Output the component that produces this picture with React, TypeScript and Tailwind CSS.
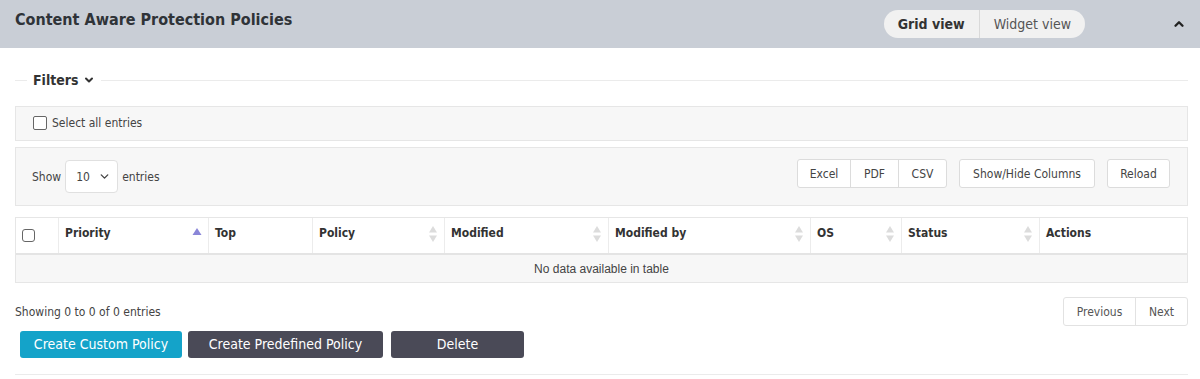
import { ChevronDown, ChevronUp } from "lucide-react";

const FONT = "font-['Tahoma','DejaVu_Sans_Condensed','DejaVu_Sans',sans-serif]";

function SortIcon({ active }: { active?: boolean }) {
  if (active) {
    return (
      <svg width="10" height="10" viewBox="0 0 10 10" className="shrink-0">
        <path d="M5 1 L9.5 8 L0.5 8 Z" fill="#8a86d8" />
      </svg>
    );
  }
  return (
    <svg width="10" height="18" viewBox="0 0 10 18" className="shrink-0">
      <path d="M5 1 L9 7.5 L1 7.5 Z" fill="#dcdcdc" />
      <path d="M5 17 L9 10.5 L1 10.5 Z" fill="#dcdcdc" />
    </svg>
  );
}

const columns: { label: string; width: string; sort: "active" | "both" | "none" }[] = [
  { label: "Priority", width: "w-[150px]", sort: "active" },
  { label: "Top", width: "w-[104px]", sort: "none" },
  { label: "Policy", width: "w-[132px]", sort: "both" },
  { label: "Modified", width: "w-[164px]", sort: "both" },
  { label: "Modified by", width: "w-[202px]", sort: "both" },
  { label: "OS", width: "w-[91px]", sort: "both" },
  { label: "Status", width: "w-[138px]", sort: "both" },
  { label: "Actions", width: "flex-1", sort: "none" },
];

export default function App() {
  return (
    <div className={`${FONT} w-[1200px] h-[379px] bg-white text-[#333] overflow-hidden`}>
      {/* header */}
      <div className="h-[48px] bg-[#c9ced6] flex items-start justify-between pl-[15px] pr-[14px]">
        <h1 className="text-[16px] font-bold text-[#2f3338] mt-[8px]">Content Aware Protection Policies</h1>
        <div className="flex items-center mt-[10px]">
          <div className="flex h-[28px] rounded-full bg-[#f1f1f1] text-[14px] overflow-hidden">
            <button className="px-[14px] font-bold text-[#333] border-r border-[#d9d9d9]">Grid view</button>
            <button className="px-[14px] text-[#555]">Widget view</button>
          </div>
          <ChevronUp className="ml-[87px] w-[14px] h-[14px] text-[#222]" strokeWidth={4} />
        </div>
      </div>

      <div className="px-[15px] pr-[12px]">
        {/* filters */}
        <div className="flex items-center mt-[16px] h-[32px]">
          <div className="w-[12px] h-px bg-[#ebebeb]" />
          <span className="px-[6px] text-[14px] font-bold text-[#333] flex items-center gap-[4px]">
            Filters
            <ChevronDown className="w-[12px] h-[12px]" strokeWidth={4} />
          </span>
          <div className="flex-1 h-px bg-[#ebebeb]" />
        </div>

        {/* select all */}
        <div className="mt-[10px] h-[35px] bg-[#f7f7f7] border border-[#e6e6e6] flex items-center pl-[17px] pb-[2px] text-[12px] text-[#444]">
          <span className="w-[14px] h-[14px] border border-[#666] rounded-[2px] bg-white mr-[5px]" />
          Select all entries
        </div>

        {/* toolbar */}
        <div className="mt-[6px] h-[59px] bg-[#f7f7f7] border border-[#e6e6e6] flex items-center justify-between pl-[16px] pr-[17px] text-[12px] text-[#444]">
          <div className="flex items-center">
            <span>Show</span>
            <div className="mx-[4px] w-[53px] h-[33px] bg-white border border-[#e0e0e0] rounded-[4px] flex items-center justify-between pl-[10px] pr-[6px]">
              <span>10</span>
              <ChevronDown className="w-[13px] h-[13px]" strokeWidth={2.5} />
            </div>
            <span>entries</span>
          </div>
          <div className="flex items-center -mt-[6px]">
            <div className="flex h-[29px] bg-white border border-[#dcdcdc] rounded-[3px]">
              <span className="w-[53px] flex items-center justify-center border-r border-[#dcdcdc]">Excel</span>
              <span className="w-[48px] flex items-center justify-center border-r border-[#dcdcdc]">PDF</span>
              <span className="w-[47px] flex items-center justify-center">CSV</span>
            </div>
            <span className="ml-[12px] w-[136px] h-[29px] bg-white border border-[#dcdcdc] rounded-[3px] flex items-center justify-center">
              Show/Hide Columns
            </span>
            <span className="ml-[12px] w-[63px] h-[29px] bg-white border border-[#dcdcdc] rounded-[3px] flex items-center justify-center">
              Reload
            </span>
          </div>
        </div>

        {/* table */}
        <div className="mt-[11px] border border-[#e6e6e6]">
          <div className="flex h-[37px] border-b-2 border-[#e4e4e4] text-[12px] font-bold text-[#333]">
            <div className="w-[43px] flex items-center pl-[6px] border-r border-[#ececec]">
              <span className="w-[13px] h-[13px] border border-[#666] rounded-[3px]" />
            </div>
            {columns.map((c, i) => (
              <div
                key={c.label}
                className={`${c.width} flex items-start justify-between pl-[6px] pr-[6px] pt-[6px] ${
                  i < columns.length - 1 ? "border-r border-[#ececec]" : ""
                }`}
              >
                <span>{c.label}</span>
                {c.sort === "active" && <span className="mt-[3px]"><SortIcon active /></span>}
                {c.sort === "both" && <span className="mt-[1px]"><SortIcon /></span>}
              </div>
            ))}
          </div>
          <div className="h-[27px] bg-[#f7f7f7] flex items-center justify-center text-[12px] text-[#444] font-['Liberation_Sans',Arial,sans-serif]">
            No data available in table
          </div>
        </div>

        {/* info + pagination */}
        <div className="flex items-start justify-between mt-[14px]">
          <span className="text-[12px] text-[#444] mt-[6px]">Showing 0 to 0 of 0 entries</span>
          <div className="flex h-[29px] border border-[#e2e2e2] rounded-[3px] text-[12px] text-[#555] bg-white">
            <span className="w-[72px] flex items-center justify-center border-r border-[#e2e2e2]">Previous</span>
            <span className="w-[51px] flex items-center justify-center">Next</span>
          </div>
        </div>

        {/* actions */}
        <div className="flex items-center gap-[6px] ml-[5px] mt-[5px] text-[14px] text-white">
          <button className="w-[162px] h-[27px] rounded-[3px] bg-[#14a3c9]">Create Custom Policy</button>
          <button className="w-[195px] h-[27px] rounded-[3px] bg-[#4a4a57]">Create Predefined Policy</button>
          <button className="ml-[2px] w-[133px] h-[27px] rounded-[3px] bg-[#4a4a57]">Delete</button>
        </div>

        <div className="mt-[16px] h-px bg-[#ebebeb]" />
      </div>
    </div>
  );
}
